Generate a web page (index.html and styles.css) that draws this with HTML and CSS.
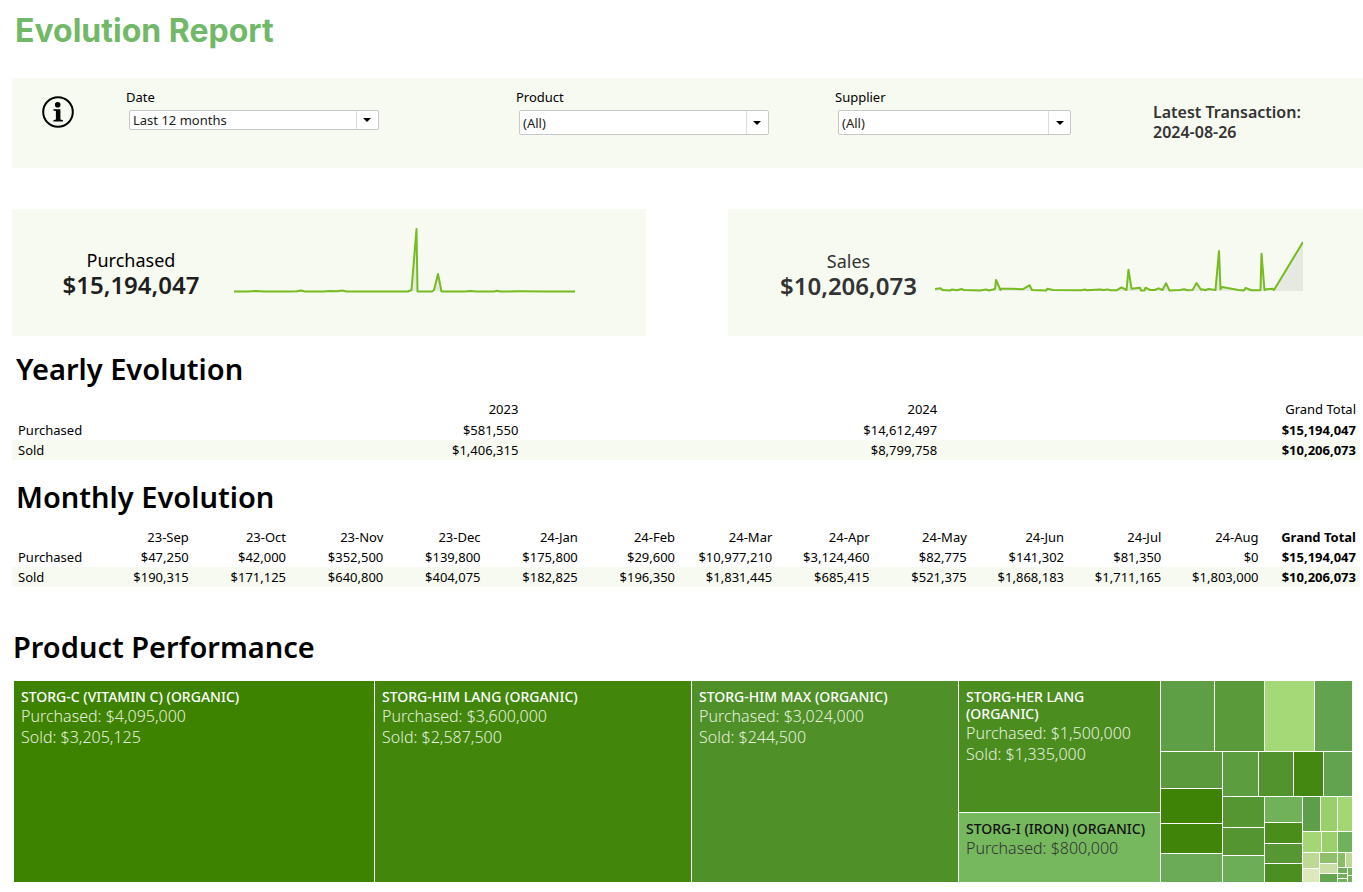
FILE: index.html
```html
<!DOCTYPE html>
<html lang="en">
<head>
<meta charset="utf-8">
<title>Evolution Report</title>
<link rel="stylesheet" href="styles.css">
</head>
<body>
<main class="report">
  <h1 class="report-title">Evolution Report</h1>

  <section class="filters">
    <svg class="info-icon" viewBox="0 0 32 32" role="img" aria-label="Information">
      <circle cx="16" cy="16" r="14.8" fill="none" stroke="#000" stroke-width="2"/>
      <circle cx="15.7" cy="8.8" r="2.8"/>
      <path d="M11.4 13.2H18.4V23.6L21 24.3V25.4H11.4V24.3L13.9 23.6V15L11.4 14.4Z"/>
    </svg>
    <div class="filter filter-date">
      <label for="date">Date</label>
      <div class="picker"><select id="date"><option>Last 12 months</option></select><span class="arrow"></span></div>
    </div>
    <div class="filter filter-product">
      <label for="product">Product</label>
      <div class="picker picker-tall"><select id="product"><option>(All)</option></select><span class="arrow"></span></div>
    </div>
    <div class="filter filter-supplier">
      <label for="supplier">Supplier</label>
      <div class="picker picker-tall"><select id="supplier"><option>(All)</option></select><span class="arrow"></span></div>
    </div>
    <p class="latest">Latest Transaction:<br>2024-08-26</p>
  </section>

  <section class="cards">
    <div class="card card-purchased">
      <div class="figure"><span class="figure-name">Purchased</span><strong class="figure-value">$15,194,047</strong></div>
      <svg class="spark" viewBox="234 209 341 127" preserveAspectRatio="none">
        <path class="area" d="M234 291L410 291 411.500 290 416 229 417.500 291 432 291 434 290 438 274 441.500 291 575 291Z"/>
        <path class="line" d="M234 291.500L248 291.500 256 291 264 291.500 290 291.500 297 291.300 301 290.500 305 291.500 324 291.500 330 290.900 337 291.200 343 290.600 346 291.500 408 291.500 411.500 290 416.500 229 417.500 291.500 432 291.500 434 290 438 274 441.500 291.500 465 291.500 470 291 476 291.500 494 291.500 497 290.800 500 291.500 520 291.300 545 291.400 575 291.500"/>
      </svg>
    </div>
    <div class="card card-sales">
      <div class="figure"><span class="figure-name">Sales</span><strong class="figure-value">$10,206,073</strong></div>
      <svg class="spark" viewBox="935 209 368 127" preserveAspectRatio="none">
        <path class="area" d="M935 291L935 289 995 289 996 280 1000 290 1011 289 1022 289 1029 285 1032 290 1116 290 1121 287 1126 290 1128 270 1131 289 1140 288 1141 290 1162 290 1166 283 1169 290 1192 290 1196 283 1201 290 1216 290 1219 251 1220 289 1223 287 1238 290 1260 290 1261 254 1264 290 1274 290 1303 242 1303 291Z"/>
        <path class="line" d="M935 289L940.500 288.300 942.500 290 950 290.500 952 289.500 957 290.300 961.500 289 964 290 980 290.500 986 289.500 989 290.500 995 289 996 280 1000.500 290 1001.500 288.700 1011.500 288.700 1022.500 289.300 1029.500 285.300 1032 290 1046 290.500 1047.500 288.700 1053 290 1081.500 290.300 1085 289.500 1087 290.300 1100 289.400 1104 290 1107.500 289.400 1110.500 290.300 1116.500 290.300 1121.500 287.300 1126.500 290 1128.500 269.700 1131.500 288.700 1140 287.700 1141 290.500 1144.500 290.500 1145.500 287.700 1150 290 1155 290 1158.500 288.300 1162.500 290 1166 283.300 1169.500 290.500 1180 290 1184 289.300 1187.500 290.300 1192.500 290 1196.500 283 1201 289.700 1203 289.300 1205 290.300 1208.500 289 1215.500 290 1219 251 1220.500 289.300 1222 287 1238.500 290 1244 290.500 1245.500 288 1251.500 290.300 1260.500 290.300 1261.500 253.700 1264.500 290 1266.500 289.300 1272.500 288.700 1274 290 1303 242"/>
      </svg>
    </div>
  </section>

  <h2 class="heading heading-yearly">Yearly Evolution</h2>
  <table class="grid yearly">
    <colgroup><col class="name-col"><col><col><col></colgroup>
    <thead><tr><td></td><th scope="col">2023</th><th scope="col">2024</th><th scope="col">Grand Total</th></tr></thead>
    <tbody>
      <tr><th scope="row">Purchased</th><td>$581,550</td><td>$14,612,497</td><td class="total">$15,194,047</td></tr>
      <tr><th scope="row">Sold</th><td>$1,406,315</td><td>$8,799,758</td><td class="total">$10,206,073</td></tr>
    </tbody>
  </table>

  <h2 class="heading heading-monthly">Monthly Evolution</h2>
  <table class="grid monthly">
    <colgroup><col class="name-col"><col><col><col><col><col><col><col><col><col><col><col><col><col></colgroup>
    <thead><tr><td></td><th scope="col">23-Sep</th><th scope="col">23-Oct</th><th scope="col">23-Nov</th><th scope="col">23-Dec</th><th scope="col">24-Jan</th><th scope="col">24-Feb</th><th scope="col">24-Mar</th><th scope="col">24-Apr</th><th scope="col">24-May</th><th scope="col">24-Jun</th><th scope="col">24-Jul</th><th scope="col">24-Aug</th><th scope="col" class="total">Grand Total</th></tr></thead>
    <tbody>
      <tr><th scope="row">Purchased</th><td>$47,250</td><td>$42,000</td><td>$352,500</td><td>$139,800</td><td>$175,800</td><td>$29,600</td><td>$10,977,210</td><td>$3,124,460</td><td>$82,775</td><td>$141,302</td><td>$81,350</td><td>$0</td><td class="total">$15,194,047</td></tr>
      <tr><th scope="row">Sold</th><td>$190,315</td><td>$171,125</td><td>$640,800</td><td>$404,075</td><td>$182,825</td><td>$196,350</td><td>$1,831,445</td><td>$685,415</td><td>$521,375</td><td>$1,868,183</td><td>$1,711,165</td><td>$1,803,000</td><td class="total">$10,206,073</td></tr>
    </tbody>
  </table>

  <h2 class="heading heading-products">Product Performance</h2>
  <div class="treemap" id="treemap"></div>
</main>
<script src="treemap.js"></script>
</body>
</html>
```

FILE: styles.css
```css
* { box-sizing: border-box; }

body {
  margin: 0;
  background: #fff;
  color: #000;
  font: 13px/20px "Noto Sans", sans-serif;
}

.report { padding: 0 0 10px 12px; }

.report-title {
  margin: 0;
  padding: 11px 0 27px 3px;
  color: #71b968;
  font: 700 32px/40px Inter, sans-serif;
}

.filters {
  display: grid;
  grid-template-columns: 114fr 390fr 319fr 318fr 210fr;
  min-height: 90px;
  background: #f7faf1;
}

.info-icon {
  width: 32px;
  height: 32px;
  margin: 18px 0 0 30px;
}

.filter { padding-top: 9px; }
.filter label { display: block; }

.picker {
  position: relative;
  height: 20px;
  margin: 3px 0 0 3px;
}
.picker-tall { height: 25px; }
.filter-date .picker { width: 64%; }
.filter-product .picker { width: 78.3%; }
.filter-supplier .picker { width: 73.3%; }

.picker select {
  width: 100%;
  height: 100%;
  padding: 0 26px 0 3px;
  border: 1px solid #c8c8c8;
  border-radius: 2px;
  background: #fff;
  color: #222;
  font: 13px/18px "Noto Sans", sans-serif;
  appearance: none;
}

.arrow {
  position: absolute;
  top: 1px;
  right: 1px;
  bottom: 1px;
  display: grid;
  width: 22px;
  place-items: center;
  border-left: 1px solid #ddd;
  pointer-events: none;
}
.arrow::after {
  border: 4px solid transparent;
  border-top-color: #000;
  border-bottom: 0;
  content: "";
}

.latest {
  margin: 0;
  padding-top: 24px;
  color: #333;
  font: 600 16px/20px "Noto Sans", sans-serif;
}

.cards {
  display: grid;
  grid-template-columns: 634fr 635fr;
  gap: 82px;
  margin-top: 41px;
}

.card {
  display: grid;
  min-height: 127px;
  background: #f7faf1;
}
.card-purchased { grid-template-columns: 222fr 341fr 71fr; color: #000; }
.card-sales { grid-template-columns: 207fr 368fr 60fr; color: #333; }

.figure {
  display: flex;
  flex-direction: column;
  align-self: center;
  align-items: center;
  padding-left: 16px;
}
.card-sales .figure { padding: 2px 0 0 34px; }
.figure-name { font-size: 18px; line-height: 24px; }
.figure-value { font-size: 24px; font-weight: 600; line-height: 26px; }
.card-purchased .figure-value { color: #1e1e1e; }

.spark {
  display: block;
  width: 100%;
  height: 127px;
}
.area { fill: #e6e8e2; }
.line {
  fill: none;
  stroke: #76bc21;
  stroke-linejoin: round;
  stroke-width: 2px;
  vector-effect: non-scaling-stroke;
}

.heading {
  margin: 0;
  font: 600 29px/40px "Noto Sans", sans-serif;
}
.heading-yearly { padding: 13px 0 10px 4px; }
.heading-monthly { padding: 17px 0 10px 4px; }
.heading-products { padding: 40px 0 14px 1px; }

.grid {
  width: calc(100% - 3px);
  border-collapse: collapse;
  table-layout: fixed;
}
.yearly .name-col { width: 6.8%; }
.monthly .name-col { width: 6.2%; }
.grid th, .grid td {
  height: 20px;
  padding: 0 4px;
  font-weight: 400;
  text-align: right;
  white-space: nowrap;
}
.yearly thead th, .yearly thead td { height: 21px; padding-bottom: 1px; }
.grid tbody th { padding-left: 6px; text-align: left; }
.grid tbody tr:last-child { background: #f7faf1; }
.grid .total { font-weight: 700; }

.treemap {
  display: flex;
  height: 201px;
  margin: 0 11px 0 2px;
}
.group {
  display: flex;
  flex-basis: 0;
  gap: 1px;
  min-width: 0;
  min-height: 0;
}
.group-column { flex-direction: column; }
.tile {
  flex-basis: 0;
  min-width: 0;
  min-height: 0;
  overflow: hidden;
  color: #e6f0df;
  font: 300 16px/21px "Noto Sans", sans-serif;
}
.tile-text { padding: 7px; }
.tile-name {
  margin: 0 0 1px;
  color: #fff;
  font: 500 14px/17px "Noto Sans", sans-serif;
}
.tile-line { margin: 0; }
.tile-dark { color: #333; }
.tile-dark .tile-name { color: #111; }
```

FILE: treemap.js
```js
// Leaf: [size, colour, name, lines, dark text]; branch: {size, dir, items}
const row = (size, ...items) => ({ size, dir: "row", items });
const col = (size, ...items) => ({ size, dir: "column", items });

const tree = row(1,
  [360, "#3e8300", "STORG-C (VITAMIN C) (ORGANIC)", ["Purchased: $4,095,000", "Sold: $3,205,125"]],
  [316, "#42870c", "STORG-HIM LANG (ORGANIC)", ["Purchased: $3,600,000", "Sold: $2,587,500"]],
  [266, "#4f9028", "STORG-HIM MAX (ORGANIC)", ["Purchased: $3,024,000", "Sold: $244,500"]],
  col(201,
    [131, "#4b8d1f", "STORG-HER LANG (ORGANIC)", ["Purchased: $1,500,000", "Sold: $1,335,000"]],
    [69, "#76b85e", "STORG-I (IRON) (ORGANIC)", ["Purchased: $800,000"], true]),
  col(191,
    row(70, [53, "#5e9f45"], [49, "#5a9a3a"], [49, "#a5d876"], [37, "#61a34f"]),
    row(130,
      col(61, [36, "#5a9a3c"], [34, "#3e8305"], [29, "#40850a"], [28, "#6baa56"]),
      col(129,
        row(44, [35, "#5c9d40"], [34, "#52932d"], [29, "#448812"], [28, "#61a34f"]),
        row(85,
          col(41, [30, "#559632"], [27, "#549531"], [26, "#6cad57"]),
          col(37, [25, "#70b15a"], [20, "#4a8d1b"], [19, "#569733"], [18, "#4c8e20"]),
          col(49,
            row(34, [17, "#5d9f48"], [16, "#98d06b"], [14, "#a2d773"]),
            row(20, [18, "#a2d773"], [15, "#9ad16c"], [14, "#70b25c"]),
            row(29,
              col(16, [15, "#bcd995"], [13, "#dbe9bb"]),
              col(17, [10, "#8fc16b"], [9, "#c9dfa5"], [8, "#64a64d"]),
              col(14,
                row(14, [7, "#8abd65"], [6, "#bcd995"]),
                row(14,
                  col(9, [5, "#6eb05a"], [4, "#70b15a"], [3, "#70b15a"]),
                  col(4, [7, "#73b45b"], [6, "#70b15a"])))))))))
);

function build(node) {
  const el = document.createElement("div");
  if (!Array.isArray(node)) {
    el.className = "group group-" + node.dir;
    el.style.flexGrow = node.size;
    node.items.forEach((item) => el.append(build(item)));
    return el;
  }
  const [size, color, name, lines, dark] = node;
  el.className = "tile" + (dark ? " tile-dark" : "");
  el.style.flexGrow = size;
  el.style.backgroundColor = color;
  if (name) {
    const text = document.createElement("div");
    text.className = "tile-text";
    const title = document.createElement("h3");
    title.className = "tile-name";
    title.textContent = name;
    text.append(title);
    lines.forEach((line) => {
      const p = document.createElement("p");
      p.className = "tile-line";
      p.textContent = line;
      text.append(p);
    });
    el.append(text);
  }
  return el;
}

document.getElementById("treemap").append(build(tree));
```
